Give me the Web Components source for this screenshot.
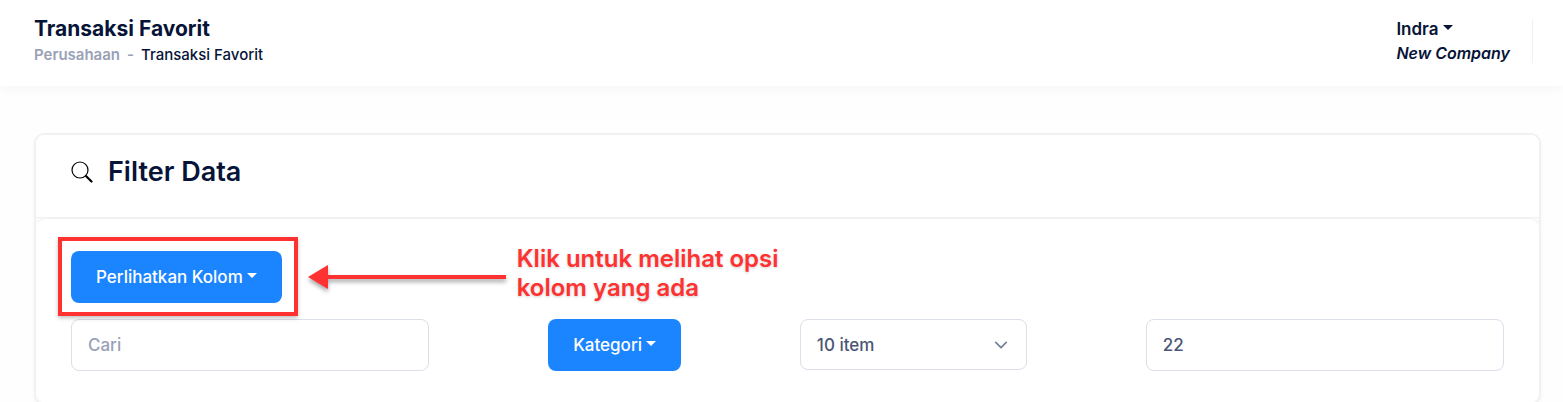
<!DOCTYPE html>
<html lang="id">
<head>
<meta charset="UTF-8">
<meta name="viewport" content="width=device-width, initial-scale=1">
<title>Transaksi Favorit</title>
<style>
  body {
    margin: 0;
    background: #fefefe;
    color: #071437;
    font-family: Inter, "Liberation Sans", sans-serif;
    font-size: 17px;
    line-height: 24px;
  }
</style>
</head>
<body>
<page-header heading="Transaksi Favorit">
  <bread-crumb slot="breadcrumb" parent="Perusahaan" current="Transaksi Favorit"></bread-crumb>
  <user-menu slot="user" name="Indra" company="New Company"></user-menu>
</page-header>

<main>
  <filter-card heading="Filter Data">
    <callout-note slot="actions">
      <dropdown-button>Perlihatkan Kolom</dropdown-button>
      <span slot="note">Klik untuk melihat opsi<br>kolom yang ada</span>
    </callout-note>
    <text-field class="wide" label="Cari" placeholder="Cari"></text-field>
    <dropdown-button>Kategori</dropdown-button>
    <select-field label="Jumlah item" options="10 item,25 item,50 item,100 item"></select-field>
    <text-field class="wide" label="Nilai" value="22"></text-field>
  </filter-card>
</main>

<script>
class PageHeader extends HTMLElement {
  connectedCallback() {
    this.attachShadow({ mode: 'open' });
    this.shadowRoot.innerHTML = `
      <style>
        :host { display: block; }
        header {
          display: flex;
          justify-content: space-between;
          align-items: center;
          height: 86px;
          box-sizing: border-box;
          padding: 0 30px 4px 34px;
          background: #fff;
          box-shadow: 0 4px 10px rgba(0, 0, 0, 0.03);
        }
        h1 {
          margin: 0;
          font-size: 21px;
          font-weight: 700;
          line-height: 28px;
        }
      </style>
      <header>
        <div>
          <h1>${this.getAttribute('heading')}</h1>
          <slot name="breadcrumb"></slot>
        </div>
        <slot name="user"></slot>
      </header>
    `;
  }
}

class BreadCrumb extends HTMLElement {
  connectedCallback() {
    this.attachShadow({ mode: 'open' });
    this.shadowRoot.innerHTML = `
      <style>
        :host { display: block; font-size: 15px; font-weight: 500; }
        nav { display: flex; gap: 7px; }
        a { color: #99a1b7; font-weight: 600; text-decoration: none; }
        .dash { color: #99a1b7; font-weight: 600; }
      </style>
      <nav aria-label="Breadcrumb">
        <a href="#">${this.getAttribute('parent')}</a>
        <span class="dash">-</span>
        <span>${this.getAttribute('current')}</span>
      </nav>
    `;
  }
}

class UserMenu extends HTMLElement {
  connectedCallback() {
    this.attachShadow({ mode: 'open' });
    this.shadowRoot.innerHTML = `
      <style>
        :host {
          display: block;
          padding-right: 22px;
          border-right: 1px solid #f1f1f4;
          font-weight: 600;
          line-height: 20px;
        }
        button {
          display: flex;
          align-items: center;
          gap: 5px;
          margin-bottom: 4px;
          padding: 0;
          border: 0;
          background: none;
          color: inherit;
          font: inherit;
          cursor: pointer;
        }
        svg { margin-bottom: 4px; }
        em { display: block; font-size: 16px; }
      </style>
      <button type="button">${this.getAttribute('name')}
        <svg width="10" height="5" viewBox="0 0 10 5" fill="currentColor" aria-hidden="true"><path d="M0 0h10L5 5z"/></svg>
      </button>
      <em>${this.getAttribute('company')}</em>
    `;
  }
}

class FilterCard extends HTMLElement {
  connectedCallback() {
    this.attachShadow({ mode: 'open' });
    this.shadowRoot.innerHTML = `
      <style>
        :host { display: block; padding: 47px 22px 0 34px; }
        .card {
          border: 2px solid #f1f1f2;
          border-radius: 10px;
          background: #fafafa;
          box-shadow: 0 3px 4px rgba(0, 0, 0, 0.03);
        }
        .head {
          display: flex;
          align-items: center;
          gap: 15px;
          height: 83px;
          box-sizing: border-box;
          padding: 0 35px 8px;
          border-bottom: 1px solid #f1f1f2;
          border-radius: 8px 8px 0 0;
          background: #fff;
        }
        h2 { margin: 0; font-size: 27px; font-weight: 600; line-height: 36px; }
        .body {
          padding: 32px 35px;
          border-top: 1px solid #f1f1f2;
          border-radius: 10px;
          background: #fff;
        }
        .row {
          display: flex;
          justify-content: space-between;
          align-items: flex-start;
          margin-top: 16px;
        }
        ::slotted(.wide) { flex: 0 0 25%; }
      </style>
      <section class="card">
        <div class="head">
          <svg width="22" height="22" viewBox="0 0 22 22" fill="none" stroke="#000" aria-hidden="true">
            <circle cx="9" cy="9" r="8" stroke-width="1.2"/>
            <path d="M14.5 14.5l1.5 1.5" stroke-width="1.2"/>
            <path d="M15.5 15.5l5 5" stroke-width="2.2" stroke-linecap="round"/>
          </svg>
          <h2>${this.getAttribute('heading')}</h2>
        </div>
        <div class="body">
          <slot name="actions"></slot>
          <div class="row"><slot></slot></div>
        </div>
      </section>
    `;
  }
}

class DropdownButton extends HTMLElement {
  connectedCallback() {
    this.attachShadow({ mode: 'open' });
    this.shadowRoot.innerHTML = `
      <style>
        :host { display: block; }
        button {
          display: flex;
          align-items: center;
          gap: 4px;
          height: 52px;
          padding: 0 25px;
          border: 0;
          border-radius: 8px;
          background: #1b84ff;
          color: #fff;
          font: inherit;
          font-weight: 500;
          cursor: pointer;
        }
        svg { margin-bottom: 3px; }
      </style>
      <button type="button"><slot></slot>
        <svg width="10" height="5" viewBox="0 0 10 5" fill="currentColor" aria-hidden="true"><path d="M0 0h10L5 5z"/></svg>
      </button>
    `;
  }
}

class TextField extends HTMLElement {
  connectedCallback() {
    this.attachShadow({ mode: 'open' });
    this.shadowRoot.innerHTML = `
      <style>
        :host { display: block; }
        input {
          display: block;
          width: 100%;
          height: 52px;
          box-sizing: border-box;
          padding: 0 16px;
          border: 1px solid #dbdfe9;
          border-radius: 8px;
          background: #fff;
          color: #4b5675;
          font: inherit;
          font-weight: 500;
        }
        input::placeholder { color: #99a1b7; opacity: 1; }
      </style>
      <input type="text" aria-label="${this.getAttribute('label')}"
        placeholder="${this.getAttribute('placeholder') || ''}"
        value="${this.getAttribute('value') || ''}">
    `;
  }
}

class SelectField extends HTMLElement {
  connectedCallback() {
    const options = this.getAttribute('options').split(',');

    this.attachShadow({ mode: 'open' });
    this.shadowRoot.innerHTML = `
      <style>
        :host { display: grid; align-items: center; width: 227px; }
        select, svg { grid-area: 1 / 1; }
        select {
          width: 100%;
          height: 51px;
          box-sizing: border-box;
          padding: 0 48px 0 16px;
          border: 1px solid #dbdfe9;
          border-radius: 8px;
          appearance: none;
          background: #fff;
          color: #4b5675;
          font: inherit;
          font-weight: 500;
        }
        svg { justify-self: end; margin-right: 19px; pointer-events: none; }
      </style>
      <select aria-label="${this.getAttribute('label')}">
        ${options.map(option => `<option>${option}</option>`).join('')}
      </select>
      <svg width="14" height="14" viewBox="0 0 16 16" fill="none" stroke="#78829d" stroke-width="2"
        stroke-linecap="round" stroke-linejoin="round" aria-hidden="true"><path d="M2 5l6 6 6-6"/></svg>
    `;
  }
}

// Frames the slotted control and points at it with an arrow and a note
class CalloutNote extends HTMLElement {
  connectedCallback() {
    this.attachShadow({ mode: 'open' });
    this.shadowRoot.innerHTML = `
      <style>
        :host { display: flex; }
        .target { position: relative; }
        .frame {
          position: absolute;
          inset: -14px -16px -13px -13px;
          border: 4px solid #ff3131;
          box-shadow: 0 2px 4px rgba(0, 0, 0, 0.25);
          pointer-events: none;
        }
        .note {
          position: absolute;
          top: 50%;
          left: 100%;
          display: flex;
          align-items: center;
          gap: 11px;
          margin-left: 26px;
          transform: translateY(-50%);
          color: #ff3131;
          font-size: 24px;
          font-weight: 600;
          line-height: 29px;
          white-space: nowrap;
          text-shadow: 0 1px 3px rgba(0, 0, 0, 0.2);
        }
        .text { margin-bottom: 8px; }
        svg { overflow: visible; filter: drop-shadow(0 3px 2px rgba(0, 0, 0, 0.35)); }
      </style>
      <div class="target">
        <slot></slot>
        <div class="frame"></div>
        <div class="note">
          <svg width="198" height="24" viewBox="0 0 198 24" fill="#ff3131" aria-hidden="true"><path d="M0 12L20 0v10h178v4H20v10z"/></svg>
          <div class="text"><slot name="note"></slot></div>
        </div>
      </div>
    `;
  }
}

customElements.define('page-header', PageHeader);
customElements.define('bread-crumb', BreadCrumb);
customElements.define('user-menu', UserMenu);
customElements.define('filter-card', FilterCard);
customElements.define('dropdown-button', DropdownButton);
customElements.define('text-field', TextField);
customElements.define('select-field', SelectField);
customElements.define('callout-note', CalloutNote);
</script>
</body>
</html>
